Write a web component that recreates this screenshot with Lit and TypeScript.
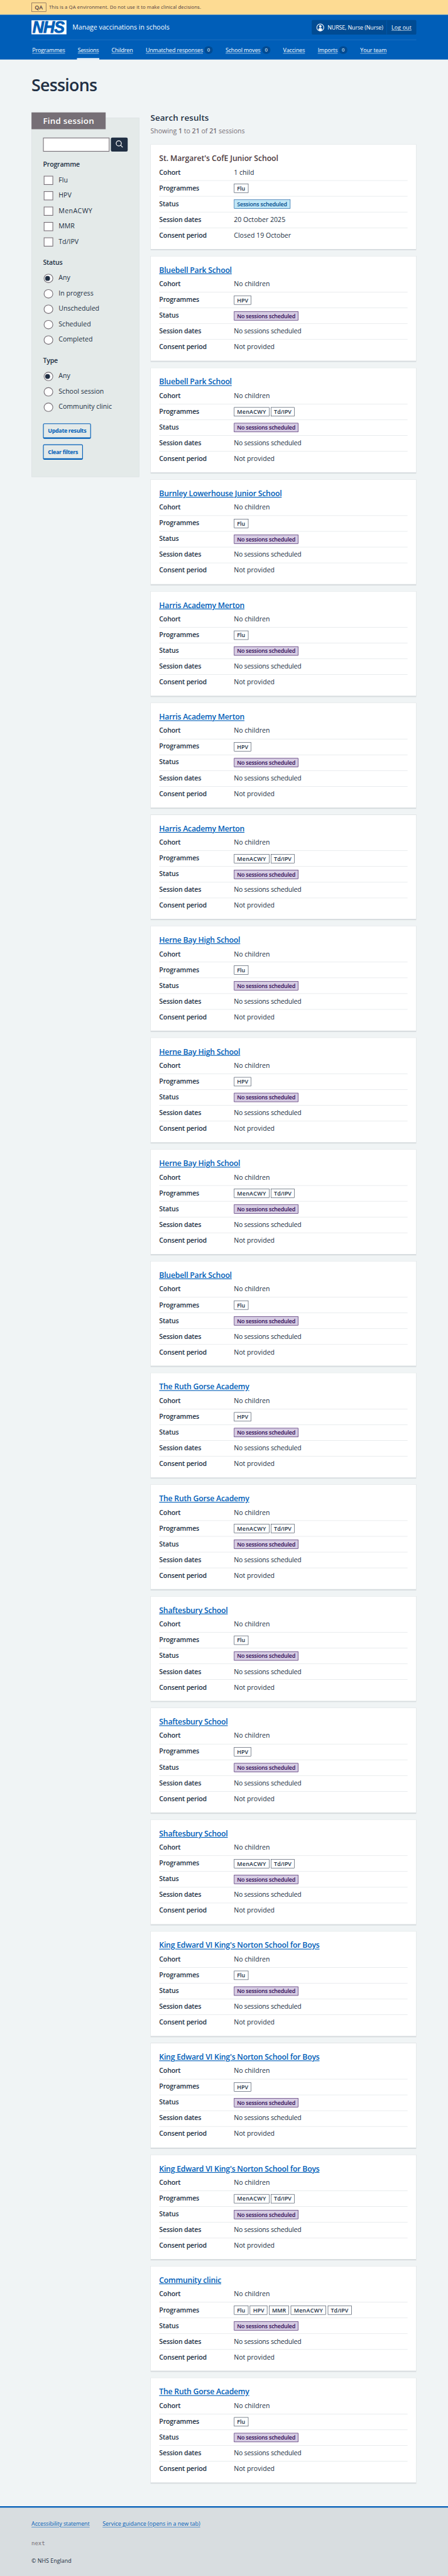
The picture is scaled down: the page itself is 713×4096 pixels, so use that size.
import { LitElement, html, css } from "lit";

interface Session { name: string; programmes: string[]; first?: boolean }

const names: [string, string[][]][] = [
  ["Bluebell Park School", [["HPV"], ["MenACWY", "Td/IPV"]]],
  ["Burnley Lowerhouse Junior School", [["Flu"]]],
  ["Harris Academy Merton", [["Flu"], ["HPV"], ["MenACWY", "Td/IPV"]]],
  ["Herne Bay High School", [["Flu"], ["HPV"], ["MenACWY", "Td/IPV"]]],
  ["Bluebell Park School", [["Flu"]]],
  ["The Ruth Gorse Academy", [["HPV"], ["MenACWY", "Td/IPV"]]],
  ["Shaftesbury School", [["Flu"], ["HPV"], ["MenACWY", "Td/IPV"]]],
  ["King Edward VI King's Norton School for Boys", [["Flu"], ["HPV"], ["MenACWY", "Td/IPV"]]],
  ["Community clinic", [["Flu", "HPV", "MMR", "MenACWY", "Td/IPV"]]],
  ["The Ruth Gorse Academy", [["Flu"]]],
];

const sessions: Session[] = [
  { name: "St. Margaret's CofE Junior School", programmes: ["Flu"], first: true },
  ...names.flatMap(([name, lists]) => lists.map((programmes) => ({ name, programmes }))),
];

class SessionCard extends LitElement {
  static properties = { session: { attribute: false } };
  declare session: Session;

  static styles = css`
    :host { display: block; box-sizing: border-box; height: 302.93px; background: #fff; border: 1px solid #d8dde0; border-bottom-width: 4px; padding: 24px 24px 0; }
    .title { margin: 0; height: 34px; font-size: 22px; line-height: 29px; font-weight: 600; letter-spacing: -0.019em; color: #005eb8; }
    .title a { color: inherit; text-decoration: underline; text-decoration-thickness: 2px; text-underline-offset: 2px; }
    .title.plain { color: #4c3a40; letter-spacing: -0.007em; }
    .list { margin: 0; }
    .row { display: grid; grid-template-columns: 213.5px 1fr; height: 45px; box-sizing: border-box; border-bottom: 1px solid #d8dde0; font-size: 19px; line-height: 28px; }
    .row:last-child { border-bottom: 0; }
    dt, dd { margin: 0; padding-top: 6.6px; }
    dt { font-weight: 600; letter-spacing: -0.017em; }
    dd.none { letter-spacing: -0.022em; }
    dd.tags { display: flex; gap: 4.6px; padding-top: 9px; }
    .tag { height: 26px; box-sizing: border-box; border: 1px solid #212f43; padding: 0 8px; font-size: 16px; line-height: 24px; font-weight: 600; white-space: nowrap; }
    .MenACWY { letter-spacing: 0.033em; }
    .purple { background: #d6cce3; border-color: #2e0753; color: #2e0753; letter-spacing: -0.022em; }
    .blue { background: #bfe6f7; border-color: #004b93; color: #004b8c; letter-spacing: -0.02em; }
  `;

  render() {
    const s = this.session;
    return html`
      <h4 class="title ${s.first ? "plain" : ""}">${s.first ? s.name : html`<a>${s.name}</a>`}</h4>
      <dl class="list">
        <div class="row"><dt>Cohort</dt><dd>${s.first ? "1 child" : "No children"}</dd></div>
        <div class="row"><dt>Programmes</dt><dd class="tags">${s.programmes.map((p) => html`<span class="tag ${p === "MenACWY" ? p : ""}">${p}</span>`)}</dd></div>
        <div class="row"><dt>Status</dt><dd class="tags">${s.first ? html`<span class="tag blue">Sessions scheduled</span>` : html`<span class="tag purple">No sessions scheduled</span>`}</dd></div>
        <div class="row"><dt>Session dates</dt><dd class=${s.first ? "" : "none"}>${s.first ? "20 October 2025" : "No sessions scheduled"}</dd></div>
        <div class="row"><dt>Consent period</dt><dd>${s.first ? "Closed 19 October" : "Not provided"}</dd></div>
      </dl>`;
  }
}
customElements.define("session-card", SessionCard);

class FilterPanel extends LitElement {
  static styles = css`
    :host { display: block; box-sizing: border-box; width: 308px; height: 1026px; background: #e4eae9; border: 1px solid #d8dde0; padding: 0 32px; }
    .heading { margin: -16px 0 24px -33px; width: 212px; height: 48px; box-sizing: border-box; padding-left: 33px; background: #766f76; color: #fff; font-size: 24px; line-height: 48px; font-weight: 600; letter-spacing: 0.017em; }
    .search { display: flex; gap: 4px; height: 40px; }
    .input { width: 190px; box-sizing: border-box; border: 2px solid #766f76; background: #fff; }
    .go { width: 48px; border-radius: 4px; background: #202f43; display: flex; align-items: center; justify-content: center; padding-bottom: 4px; box-sizing: border-box; }
    .legend { margin: 22.4px 0 9.6px; font-size: 19px; line-height: 28px; font-weight: 600; letter-spacing: -0.02em; }
    .option { display: flex; align-items: center; height: 44px; padding-left: 2px; font-size: 19px; }
    .box { width: 26.5px; height: 26.5px; box-sizing: border-box; border: 2px solid #766f76; background: #fff; margin-right: 16px; }
    .radio { border-radius: 50%; padding: 4.2px 0 0 2.2px; }
    .dot { display: block; width: 14px; height: 14px; border-radius: 50%; background: #202f43; }
    .label { line-height: 28px; padding-bottom: 3px; }
    .MenACWY { letter-spacing: 0.04em; }
    .buttons { display: flex; flex-direction: column; align-items: flex-start; gap: 16px; margin-top: 23.6px; }
    .button { height: 44px; box-sizing: border-box; border: 2px solid #005eb8; border-bottom-width: 4px; border-radius: 4px; padding: 0 12px; color: #005eb8; font-size: 16px; line-height: 39px; font-weight: 700; letter-spacing: -0.036em; white-space: nowrap; }
  `;

  option(label: string, radio: boolean, on = false) {
    return html`<div class="option"><span class="box ${radio ? "radio" : ""}">${on ? html`<i class="dot"></i>` : ""}</span><span class="label ${label === "MenACWY" ? label : ""}">${label}</span></div>`;
  }

  render() {
    return html`
      <div class="heading">Find session</div>
      <div class="search">
        <div class="input"></div>
        <div class="go"><svg width="22" height="22" viewBox="0 0 22 22" fill="none" stroke="#fff" stroke-width="2.2" stroke-linecap="round"><circle cx="9.5" cy="9.5" r="7.4"/><path d="M15 15l5 5"/></svg></div>
      </div>
      <div class="legend">Programme</div>
      ${["Flu", "HPV", "MenACWY", "MMR", "Td/IPV"].map((l) => this.option(l, false))}
      <div class="legend">Status</div>
      ${["Any", "In progress", "Unscheduled", "Scheduled", "Completed"].map((l, i) => this.option(l, true, i === 0))}
      <div class="legend">Type</div>
      ${["Any", "School session", "Community clinic"].map((l, i) => this.option(l, true, i === 0))}
      <div class="buttons"><div class="button">Update results</div><div class="button">Clear filters</div></div>`;
  }
}
customElements.define("filter-panel", FilterPanel);

const nav: [string, string?][] = [
  ["Programmes"], ["Sessions"], ["Children"], ["Unmatched responses", "0"],
  ["School moves", "0"], ["Vaccines"], ["Imports", "0"], ["Your team"],
];

class AppRoot extends LitElement {
  static styles = css`
    :host { display: block; width: 713px; height: 4096px; overflow: hidden; }
    .page { width: 1281px; height: 7357px; transform: scale(0.5568); transform-origin: 0 0; background: #f0f4f5; color: #212f43; font-family: "Open Sans", "Noto Sans", sans-serif; display: flex; flex-direction: column; }
    .env { height: 42px; padding-left: 90px; background: #fddb93; color: #4f3c42; display: flex; align-items: center; gap: 8px; font-size: 14px; line-height: 26px; letter-spacing: 0.01em; }
    .env-tag { width: 42px; height: 26px; box-sizing: border-box; border: 1px solid #4f3c42; text-align: center; font-weight: 600; font-size: 16px; line-height: 25px; }
    .header { height: 128px; background: #005eb8; color: #fff; padding: 0 91px 0 90px; }
    .top { height: 71px; display: flex; align-items: center; padding-top: 1px; box-sizing: border-box; }
    .logo { flex: none; width: 100px; height: 40px; background: #fff; color: #005eb8; margin-right: 17px; box-sizing: border-box; padding-left: 3px; font: italic 700 45px/41px "Liberation Sans", sans-serif; letter-spacing: -1.6px; -webkit-text-stroke: 1.6px #005eb8; }
    .service { font-size: 19px; line-height: 28px; padding-bottom: 2px; }
    .account { margin-left: auto; width: 299px; height: 42px; border-radius: 4px; background: #004b93; display: flex; align-items: center; font-size: 16px; letter-spacing: -0.013em; }
    .user { display: flex; align-items: center; gap: 9px; width: 215px; box-sizing: border-box; padding-left: 13px; height: 40px; border-right: 1px solid #005eb8; }
    .logout { padding-left: 13px; text-decoration: underline; text-underline-offset: 2.5px; letter-spacing: 0.012em; }
    .nav { height: 57px; box-sizing: border-box; border-top: 1px solid #337ec6; display: flex; gap: 32.5px; font-size: 16px; }
    .item { display: flex; align-items: center; gap: 4px; padding: 2px 2px 0; box-sizing: border-box; height: 56px; letter-spacing: -0.014em; }
    .item.on { box-shadow: inset 0 -4px #fff; letter-spacing: -0.034em; }
    .item u { text-decoration: underline; text-underline-offset: 2.5px; text-decoration-thickness: 1px; }
    .count { width: 24px; height: 22px; border-radius: 12px; background: #004b93; font-size: 14px; line-height: 22px; text-align: center; }
    .main { flex: 1; padding: 44px 90px 0; }
    .h1 { margin: 0; font-size: 48px; line-height: 56px; font-weight: 600; letter-spacing: -0.027em; }
    .columns { display: grid; grid-template-columns: 308px 760px; gap: 32px; align-items: start; }
    .filters { margin-top: 66px; }
    .results { padding-top: 48.7px; }
    .h2 { margin: 0; font-size: 24px; line-height: 32px; font-weight: 600; letter-spacing: 0.01em; }
    .showing { margin: 7.9px 0 25.4px; font-size: 19px; line-height: 28px; color: #766f76; }
    .showing b { font-weight: 600; }
    .cards { display: flex; flex-direction: column; gap: 16px; }
    .footer { height: 200px; box-sizing: border-box; border-top: 4px solid #005eb8; background: #d8dde0; padding: 34.3px 90px 0; font-size: 16px; line-height: 24px; }
    .links { display: flex; gap: 37px; color: #005eb8; text-underline-offset: 2.5px; }
    .acc { text-decoration: underline; letter-spacing: -0.01em; }
    .svc { text-decoration: underline; }
    .version { margin: 32.2px 0 25.3px; font-family: "DejaVu Sans Mono", monospace; color: #766f76; }
  `;

  render() {
    return html`<div class="page">
      <div class="env"><span class="env-tag">QA</span><span>This is a QA environment. Do not use it to make clinical decisions.</span></div>
      <header class="header">
        <div class="top">
          <div class="logo">NHS</div>
          <span class="service">Manage vaccinations in schools</span>
          <div class="account">
            <span class="user"><svg width="23" height="23" viewBox="0 0 23 23"><circle cx="11.5" cy="11.5" r="10" fill="none" stroke="#fff" stroke-width="2"/><circle cx="11.5" cy="8.5" r="3.6" fill="#fff"/><path d="M6.5 20.5v-3.5a5 4 0 0 1 10 0v3.500a10.500 10.500 0 0 1-10 0z" fill="#fff"/></svg>NURSE, Nurse (Nurse)</span>
            <span class="logout">Log out</span>
          </div>
        </div>
        <nav class="nav">${nav.map(([l, c]) => html`<span class="item ${l === "Sessions" ? "on" : ""}"><u>${l}</u>${c ? html`<span class="count">${c}</span>` : ""}</span>`)}</nav>
      </header>
      <main class="main">
        <h1 class="h1">Sessions</h1>
        <div class="columns">
          <filter-panel class="filters"></filter-panel>
          <section class="results">
            <h2 class="h2">Search results</h2>
            <p class="showing">Showing <b>1</b> to <b>21</b> of <b>21</b> sessions</p>
            <div class="cards">${sessions.map((s) => html`<session-card .session=${s}></session-card>`)}</div>
          </section>
        </div>
      </main>
      <footer class="footer">
        <div class="links"><span class="acc">Accessibility statement</span><span class="svc">Service guidance (opens in a new tab)</span></div>
        <div class="version">next</div>
        <div>© NHS England</div>
      </footer>
    </div>`;
  }
}
customElements.define("app-root", AppRoot);
